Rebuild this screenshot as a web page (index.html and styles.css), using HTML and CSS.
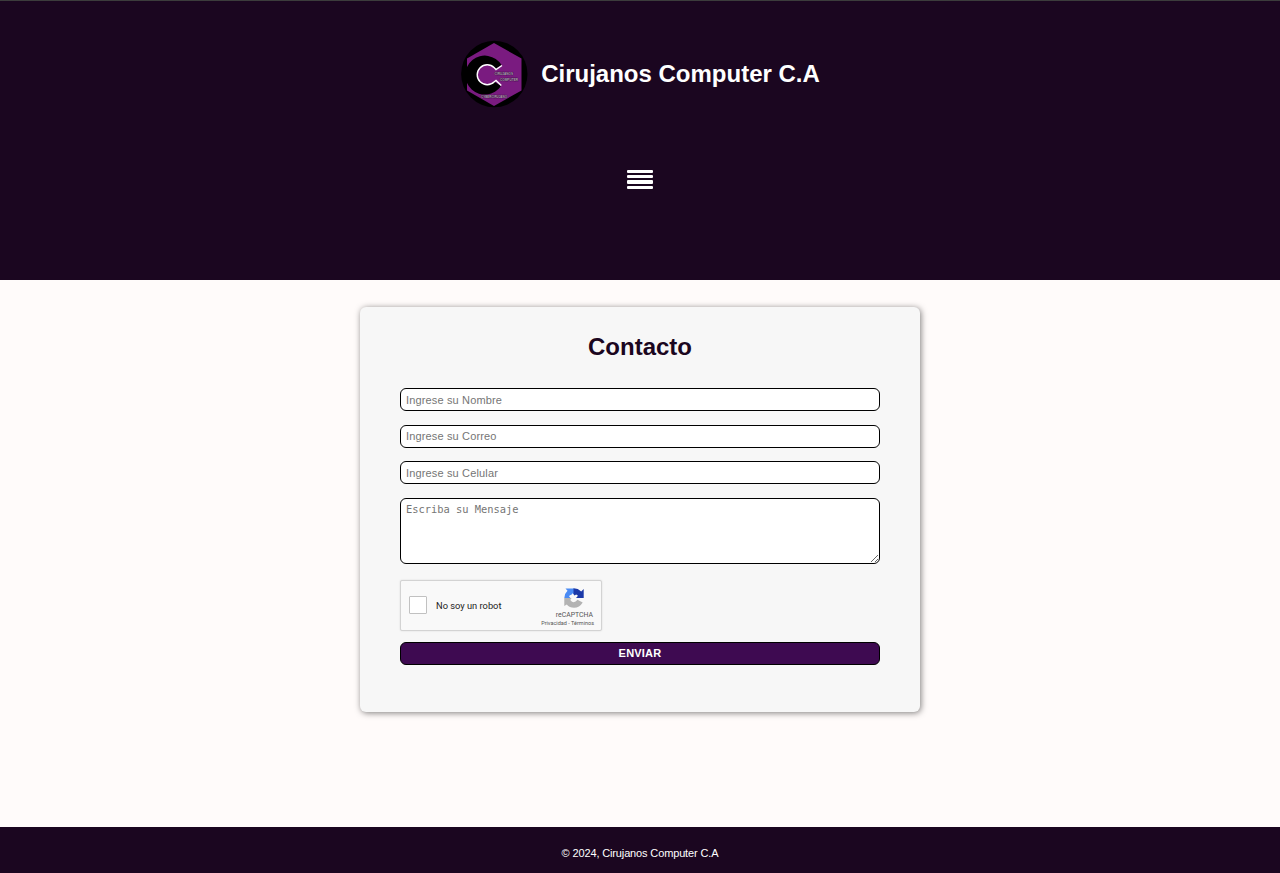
FILE: index.html
```html
<!DOCTYPE html>
<html lang="es">
<head>
<meta charset="utf-8">
<title>Cirujanos Computer C.A</title>
<link rel="stylesheet" href="styles.css">
</head>
<body>
<header class="header">
  <div class="brand">
    <svg class="logo" viewBox="0 0 68 68">
      <circle cx="34.3" cy="34" r="33.2" fill="#000"/>
      <path d="M34 3L61.5 18.5V50.500L34 66L7 50.500V18.500Z" fill="#7a1b80"/>
      <path d="M41.500 25A19.500 19.500 0 1 0 41 46L34 41.500A10 10 0 1 1 34 27.500L36 28.500Z" fill="#000"/>
      <path d="M42 25.500L36 29.500L34.300 27.700A10 10 0 1 0 34.300 41.800L36 40.500L41.300 45.500" fill="none" stroke="#fff" stroke-width="1.400"/>
      <g class="logo-text">
        <text x="34.500" y="34.500" textLength="18.500" lengthAdjust="spacingAndGlyphs">CIRUJANOS</text>
        <text x="40" y="40.500" textLength="18" lengthAdjust="spacingAndGlyphs">COMPUTER</text>
        <text x="21" y="57.800" textLength="26" lengthAdjust="spacingAndGlyphs">CYBERCIRUJANO</text>
      </g>
    </svg>
    <h1 class="brand-name">Cirujanos Computer C.A</h1>
  </div>
  <div class="menu"><span class="bar"></span><span class="bar"></span><span class="bar bar-thick"></span><span class="bar"></span></div>
</header>
<main class="main">
  <form class="card">
    <h2 class="title">Contacto</h2>
    <input class="field" type="text" placeholder="Ingrese su Nombre">
    <input class="field field-mail" type="text" placeholder="Ingrese su Correo">
    <input class="field field-phone" type="text" placeholder="Ingrese su Celular">
    <textarea class="field message" placeholder="Escriba su Mensaje"></textarea>
    <div class="captcha">
      <span class="check"></span>
      <span class="captcha-label">No soy un robot</span>
      <div class="captcha-brand">
        <svg class="captcha-icon" viewBox="0 0 20 20">
          <path d="M10 .5H1.500L3.500 2.800Q.5 5.500 .3 10H6.500L5 8.300Q6 6.500 7.500 6.700L8.500 5.200L10 6.500Z" fill="#4a8bf4"/>
          <path d="M9.500 .3Q14 .2 17.200 3.400L19.700 1V10H12L14 7.800L12.200 6.500L10.500 7.500L9.500 6Z" fill="#1c3aa9"/>
          <path d="M.300 10H7.500L6.300 12L8 13.800Q11 15 13.500 11.800L18.700 14.500Q15.500 19.800 10 19.800Q5.500 19.800 2.800 16.500L.3 18Z" fill="#b3b3b3"/>
        </svg>
        <span class="captcha-name">reCAPTCHA</span>
        <span class="captcha-links">Privacidad - Términos</span>
      </div>
    </div>
    <button class="send" type="button">ENVIAR</button>
  </form>
</main>
<footer class="footer">© 2024, Cirujanos Computer C.A</footer>
</body>
</html>
```
FILE: styles.css
```css
* { box-sizing: border-box; margin: 0; }
body {
  height: 873px;
  display: flex;
  flex-direction: column;
  background: #fffbfa;
  font-family: Arial, "Liberation Sans", sans-serif;
}
.header {
  height: 280px;
  flex: none;
  padding-top: 39px;
  border-top: 1px solid #3c3c3c;
  background: #1b0620;
  display: flex;
  flex-direction: column;
  align-items: center;
}
.brand { display: flex; align-items: center; height: 68px; gap: 13px; }
.logo { width: 68px; height: 68px; display: block; }
.logo-text {
  font: bold 4px "Liberation Sans", sans-serif;
  fill: #b9a5bd;
  stroke: #2a0a30;
  stroke-width: .6px;
  paint-order: stroke;
}
.brand-name { font-size: 24px; line-height: 28px; color: #fff; white-space: nowrap; padding-bottom: 1px; }
.menu { margin-top: 62px; width: 26px; display: flex; flex-direction: column; gap: 2px; }
.bar { height: 3px; border-radius: 1px; background: #fff; }
.bar-thick { height: 4px; }
.main { flex: 1; padding-top: 27px; }
.card {
  width: 560px;
  height: 405px;
  margin: 0 auto;
  padding: 26px 40px 0;
  border-radius: 6px;
  background: #f7f7f7;
  box-shadow: 1px 1px 6px rgba(0, 0, 0, .5);
}
.title { font-size: 24px; line-height: 28px; text-align: center; color: #1b0620; margin-bottom: 27px; }
.field {
  display: block;
  width: 480px;
  height: 23px;
  margin-bottom: 14px;
  padding: 1px 5px;
  border: 1px solid #000;
  border-radius: 6px;
  background: #fff;
  font: 11px "Liberation Sans", Arial, sans-serif;
  letter-spacing: .15px;
}
.field-mail { padding-bottom: 2px; padding-top: 0; }
.field + .field-phone { margin-top: -1px; }
.field::placeholder { color: #757575; }
.message {
  height: 66px;
  margin-bottom: 16px;
  padding: 4px 5px;
  font: 10.400px/12px "DejaVu Sans Mono", monospace;
  letter-spacing: 0;
}
.captcha {
  width: 202px;
  height: 51px;
  margin-bottom: 11px;
  padding: 0 7px 0 8px;
  border: 1px solid #d3d3d3;
  border-radius: 2px;
  background: #f9f9f9;
  box-shadow: 0 0 2px rgba(0, 0, 0, .12);
  display: flex;
  align-items: center;
  font-family: Roboto, sans-serif;
}
.check { width: 18px; height: 18px; margin-bottom: 1px; border: 1px solid #c1c1c1; border-radius: 1px; background: #fff; }
.captcha-label { margin-left: 9px; font-size: 9.300px; color: #222; white-space: nowrap; }
.captcha-brand { margin-left: auto; width: 54px; height: 49px; padding-top: 7px; color: #555; }
.captcha-icon { width: 20px; height: 20px; display: block; margin-left: 24px; }
.captcha-name { display: block; font-size: 6.900px; line-height: 8px; margin: 3px 1px 0 0; text-align: right; }
.captcha-links { display: block; font-size: 5.500px; line-height: 8px; white-space: nowrap; text-align: right; }
.send {
  display: block;
  width: 480px;
  height: 23px;
  padding: 0 0 2px;
  border: 1px solid #000;
  border-radius: 6px;
  background: #3e0a51;
  color: #fff;
  font: bold 11px "Liberation Sans", Arial, sans-serif;
  letter-spacing: .2px;
}
.footer {
  height: 46px;
  flex: none;
  background: #1b0620;
  color: #fff;
  font-size: 11px;
  letter-spacing: -.14px;
  line-height: 52px;
  text-align: center;
}
```
